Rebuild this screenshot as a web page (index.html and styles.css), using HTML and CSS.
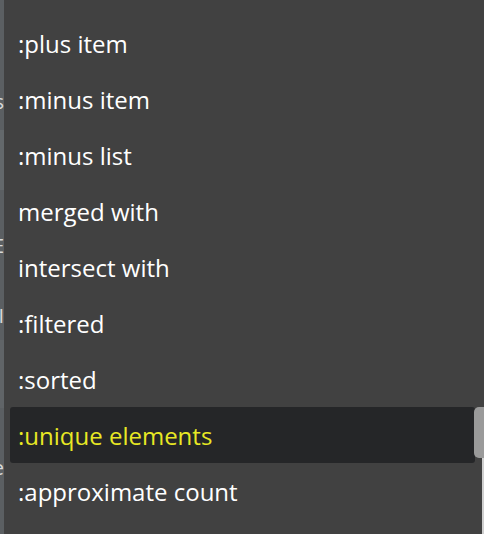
FILE: index.html
```html
<!DOCTYPE html>
<html>
<head>
<meta charset="utf-8">
<link rel="stylesheet" href="styles.css">
</head>
<body>
<div class="screen">
  <div class="behind">
    <span class="frag frag-s">s</span>
    <span class="frag frag-e">E</span>
    <span class="frag frag-l">I</span>
    <span class="frag frag-c">e</span>
  </div>
  <div class="menu">
    <ul class="list">
      <li class="item">:plus item</li>
      <li class="item">:minus item</li>
      <li class="item">:minus list</li>
      <li class="item">merged with</li>
      <li class="item">intersect with</li>
      <li class="item">:filtered</li>
      <li class="item">:sorted</li>
      <li class="item active">:unique elements</li>
      <li class="item">:approximate count</li>
    </ul>
    <div class="scroll-thumb"></div>
    <div class="scroll-track"></div>
  </div>
</div>
</body>
</html>
```
FILE: styles.css
```css
html, body {
  margin: 0;
  padding: 0;
  width: 484px;
  height: 534px;
  overflow: hidden;
  background: #414141;
}
.screen {
  display: flex;
  width: 484px;
  height: 534px;
  font-family: "Open Sans", "Noto Sans", sans-serif;
}
.behind {
  position: relative;
  width: 4px;
  flex: none;
  background: linear-gradient(#5b5f62 0, #5b5f62 130px, #63686b 130px, #63686b 190px, #5b5f62 190px, #5b5f62 340px, #606467 340px, #606467 408px, #5b5f62 408px);
  overflow: hidden;
}
.frag {
  position: absolute;
  right: 0;
  color: #d8dadb;
  font-size: 20px;
  line-height: 1;
}
.frag-s { top: 92px; }
.frag-e { top: 236px; }
.frag-l { top: 306px; }
.frag-c { top: 458px; }
.menu {
  position: relative;
  flex: 1;
  background: #414141;
}
.list {
  list-style: none;
  margin: 0;
  padding: 16px 0 0 0;
}
.item {
  height: 56px;
  margin: 0 9px 0 6px;
  padding-left: 8px;
  display: flex;
  align-items: center;
  color: #ffffff;
  font-size: 24px;
  line-height: 1;
  border-radius: 3px;
}
.item.active {
  background: #252628;
  color: #e8e824;
  height: 54px;
  margin-top: -1px;
  margin-bottom: 1px;
  padding-top: 2px;
  box-sizing: content-box;
}
.scroll-thumb {
  position: absolute;
  right: 0;
  top: 407px;
  width: 10px;
  height: 51px;
  background: #9a9a9a;
  border-radius: 5px 0 0 5px;
}
.scroll-track {
  position: absolute;
  right: 0;
  top: 458px;
  width: 2px;
  bottom: 0;
  background: #cfcfcf;
}
```
